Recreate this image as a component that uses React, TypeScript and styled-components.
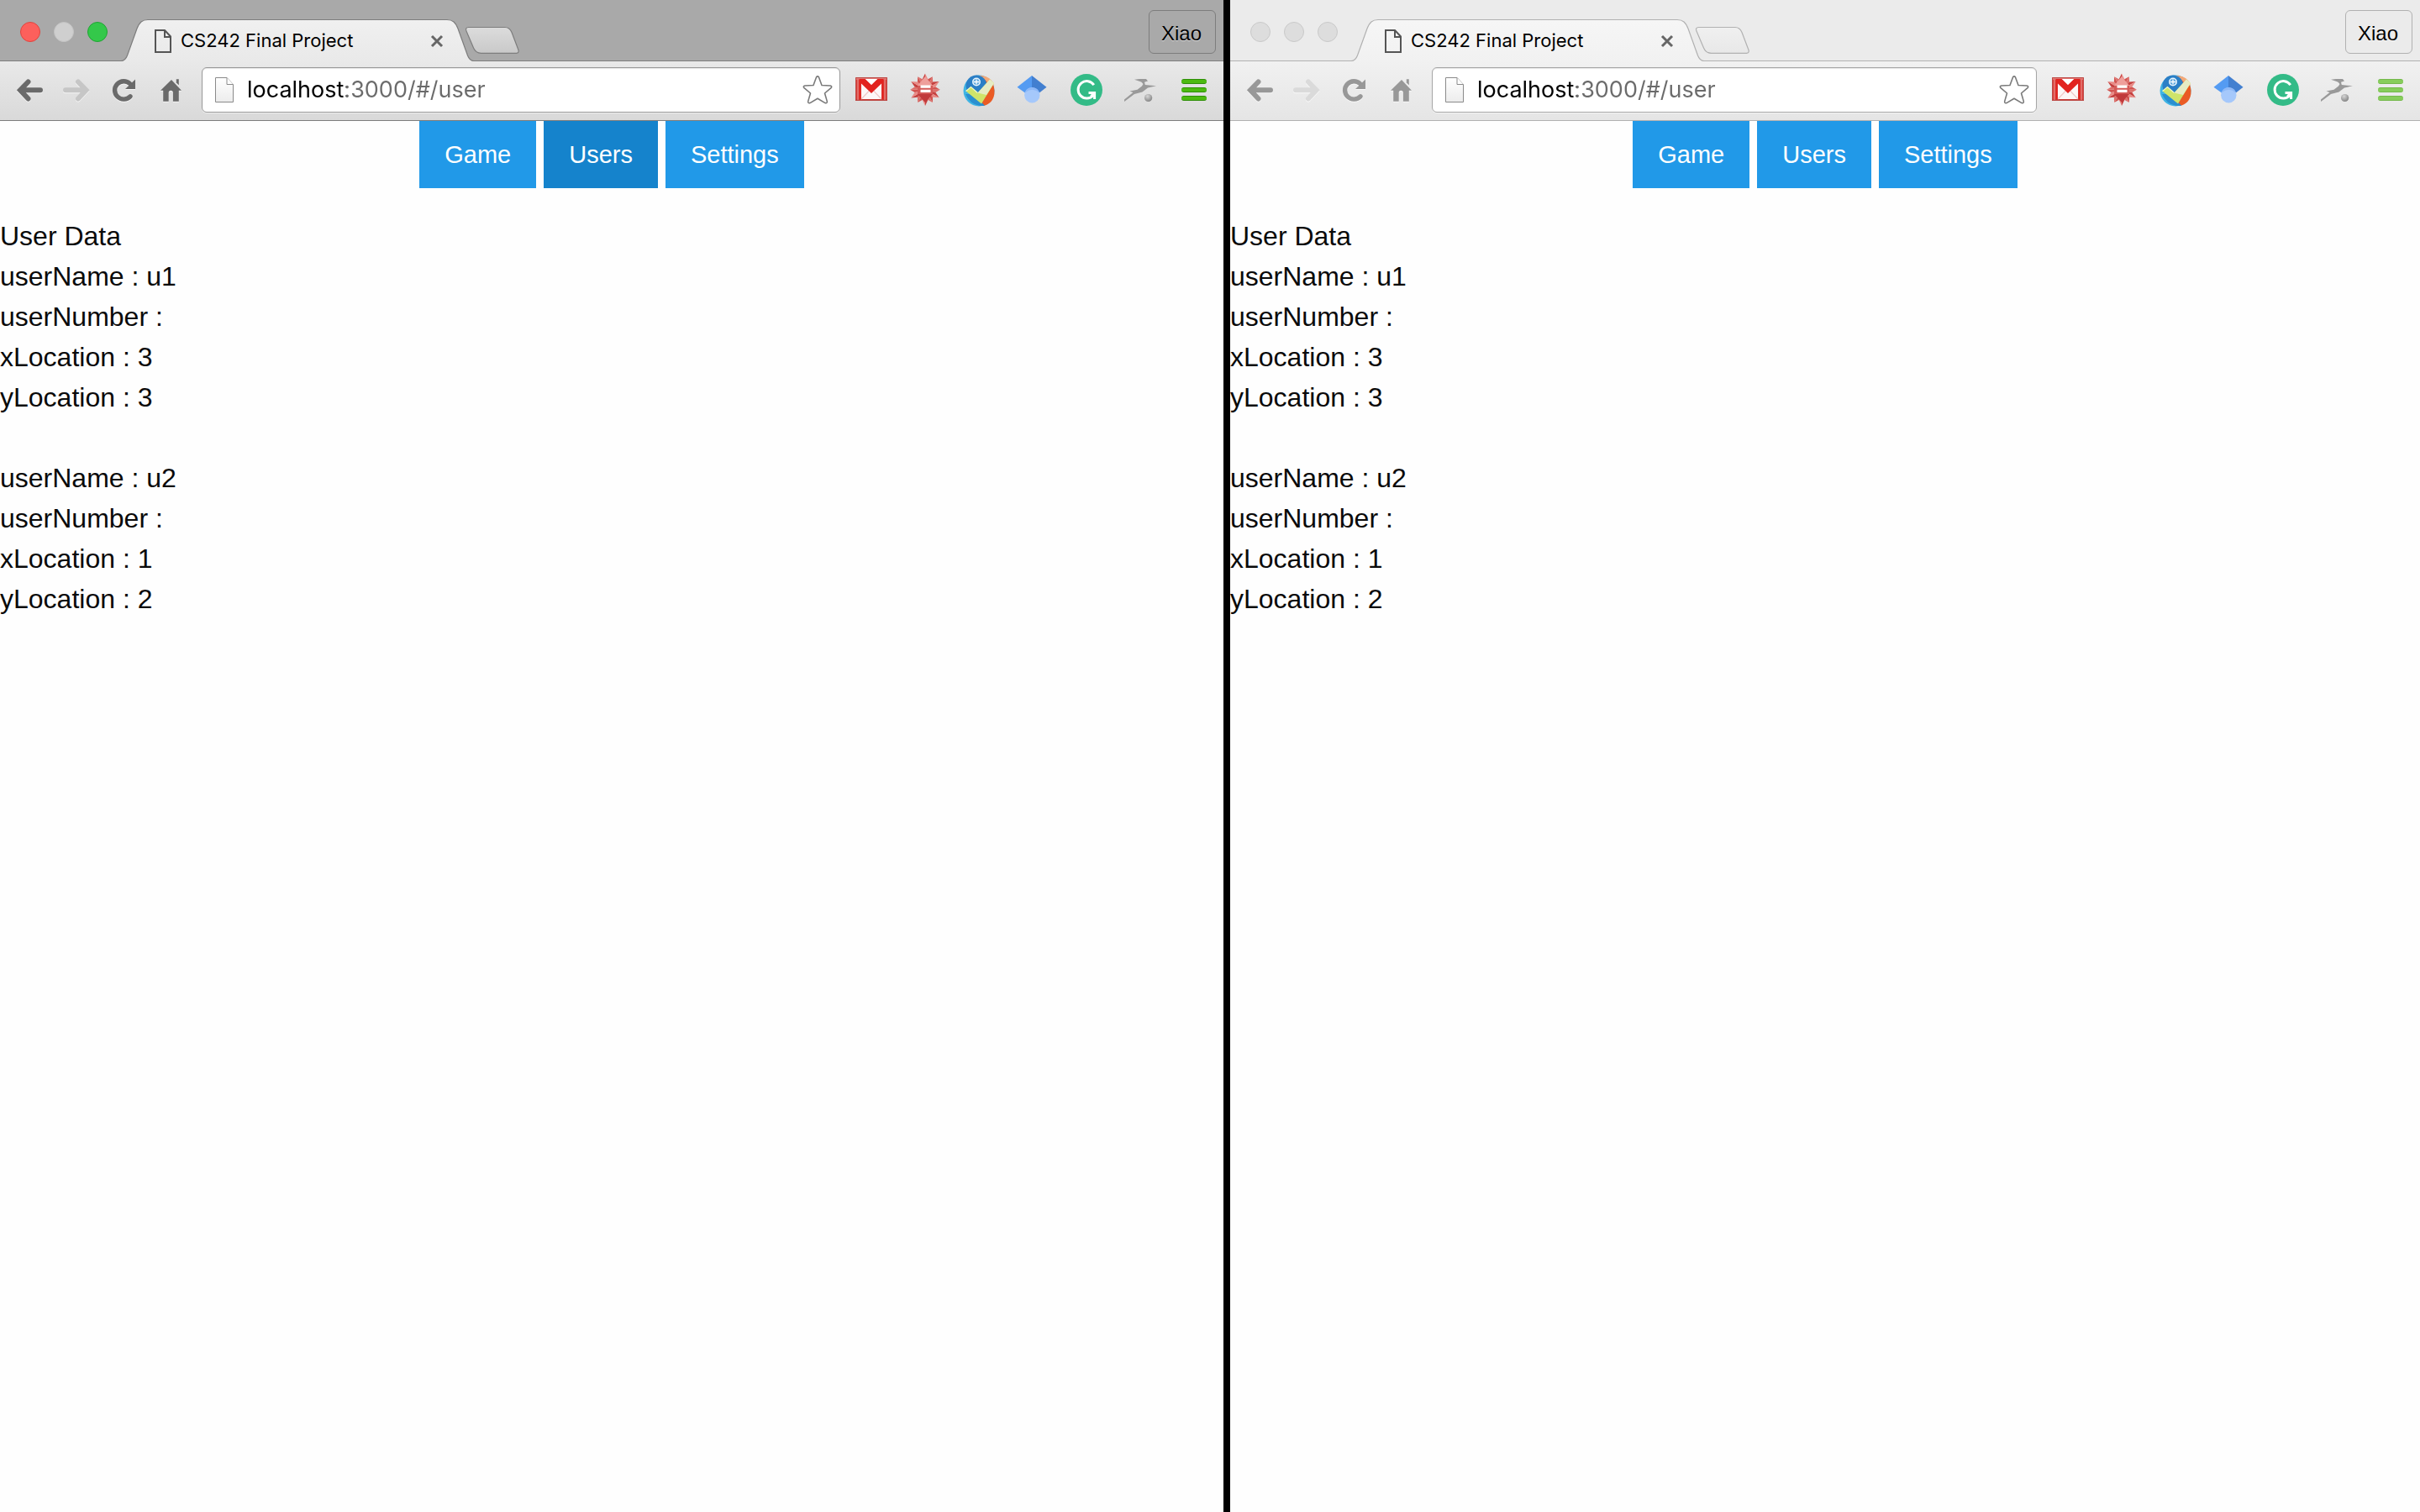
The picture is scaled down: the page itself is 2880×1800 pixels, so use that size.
import React from "react";
import styled, { createGlobalStyle, ThemeProvider } from "styled-components";

const activeTheme = {
  frame: "#a9a9a9",
  line: "#7d7d7d",
  tabTop: "#f0f0f0",
  barTop: "#e9e9e9",
  barBottom: "#d9d9d9",
  icon: "#6a6a6a",
  iconOff: "#c6c6c6",
  newTabTop: "#dcdcdc",
  newTabBottom: "#c9c9c9",
  fieldLine: "#999999",
  menu: "#4cba10",
  menuEdge: "#2f8f08",
  lights: ["#fc605c", "#cfcfcf", "#34c84a"],
  lightEdges: ["#e0443e", "#c3c3c3", "#1fa533"],
};

const idleTheme: typeof activeTheme = {
  frame: "#ebebeb",
  line: "#b1b1b1",
  tabTop: "#f6f6f6",
  barTop: "#f1f1f1",
  barBottom: "#e5e5e5",
  icon: "#989898",
  iconOff: "#dadada",
  newTabTop: "#f0f0f0",
  newTabBottom: "#e8e8e8",
  fieldLine: "#a6a6a6",
  menu: "#87cd5b",
  menuEdge: "#74b84b",
  lights: ["#dddddd", "#dddddd", "#dddddd"],
  lightEdges: ["#c9c9c9", "#c9c9c9", "#c9c9c9"],
};

type ChromeTheme = { theme: any };

const GlobalStyle = createGlobalStyle`
  * { box-sizing: border-box; }
  body { margin: 0; background: #000; }
  button { padding: 0; border: 0; background: none; font: inherit; color: inherit; cursor: pointer; }
  svg { display: block; overflow: visible; }
`;

const Desktop = styled.main`
  display: grid;
  grid-template-columns: 182fr 177fr;
  gap: 8px;
  min-height: 100vh;
  background: #000;
`;

const BrowserWindow = styled.section`
  display: flex;
  flex-direction: column;
  min-width: 0;
  background: #fefefe;
`;

const TitleBar = styled.header<ChromeTheme>`
  display: flex;
  align-items: flex-start;
  height: 73px;
  padding: 0 9px 0 24px;
  background: ${({ theme }) => theme.frame};
  border-bottom: 1px solid ${({ theme }) => theme.line};
`;

const Lights = styled.div`
  display: flex;
  gap: 16px;
  padding-top: 26px;
`;

const Light = styled.button<{ $fill: string; $edge: string }>`
  width: 24px;
  height: 24px;
  border: 1px solid ${({ $edge }) => $edge};
  border-radius: 50%;
  background: ${({ $fill }) => $fill};
`;

const Tab = styled.div`
  display: flex;
  height: 50px;
  margin: 23px 0 0 15px;
`;

const TabBody = styled.div<ChromeTheme>`
  display: flex;
  align-items: center;
  width: 356px;
  padding: 0 5px 0 8px;
  border-top: 1px solid ${({ theme }) => theme.line};
  background: linear-gradient(${({ theme }) => `${theme.tabTop}, ${theme.barTop}`});
`;

const TabTitle = styled.span`
  flex: 1;
  padding: 0 0 2px 11px;
  font: 22px/28px Inter, "Liberation Sans", sans-serif;
  color: #000;
  white-space: nowrap;
`;

const NewTab = styled.button`
  margin: 32px 0 0 -11px;
`;

const Profile = styled.button<ChromeTheme>`
  width: 80px;
  height: 52px;
  margin: 12px 0 0 auto;
  border: 1px solid ${({ theme }) => theme.line};
  border-radius: 6px;
  font: 24px/28px "Liberation Sans", Arial, sans-serif;
  color: #000;
  text-shadow: 0 1px 0 rgba(255, 255, 255, 0.6);
  padding: 3px 2px 0 0;
`;

const Toolbar = styled.div<ChromeTheme>`
  display: flex;
  align-items: center;
  height: 71px;
  padding: 7px 20px 9px;
  background: linear-gradient(${({ theme }) => `${theme.barTop}, ${theme.barBottom}`});
  border-bottom: 1px solid ${({ theme }) => theme.line};
`;

const NavButtons = styled.div`
  display: flex;
  gap: 24px;
  svg { filter: drop-shadow(0 1px 0 rgba(255, 255, 255, 0.7)); }
`;

const AddressBar = styled.form<ChromeTheme>`
  display: flex;
  flex: 1;
  align-items: center;
  min-width: 0;
  height: 54px;
  margin: 0 18px 0 20px;
  padding: 0 8px 0 15px;
  border: 1px solid ${({ theme }) => theme.fieldLine};
  border-radius: 6px;
  background: #fff;
  box-shadow: 0 1px 0 rgba(255, 255, 255, 0.5), inset 0 1px 1px rgba(0, 0, 0, 0.1);
`;

/* The host is drawn black and the rest of the address grey. */
const AddressInput = styled.input`
  flex: 1;
  min-width: 0;
  height: 40px;
  margin-left: 16px;
  padding: 0;
  border: 0;
  outline: 0;
  font: 27px/40px Inter, "Liberation Sans", sans-serif;
  color: #6b6b6b;
  background: linear-gradient(90deg, #000 118px, #6b6b6b 118px);
  background-clip: text;
  -webkit-background-clip: text;
  -webkit-text-fill-color: transparent;
`;

const Extensions = styled.div`
  display: flex;
  gap: 26px;
`;

const MenuButton = styled.button<ChromeTheme>`
  display: flex;
  flex-direction: column;
  gap: 4px;
  width: 30px;
  margin-left: 30px;
`;

const MenuBar = styled.span<ChromeTheme>`
  height: 6px;
  border-radius: 3px;
  border-top: 1px solid ${({ theme }) => theme.menuEdge};
  border-bottom: 1px solid ${({ theme }) => theme.menuEdge};
  background: ${({ theme }) => theme.menu};
`;

const SiteNav = styled.nav`
  display: flex;
  justify-content: center;
  gap: 9px;
`;

const SiteLink = styled.a<{ $current?: boolean }>`
  padding: 20px 30px;
  font: 29px/40px "Liberation Sans", Arial, sans-serif;
  color: #fefefe;
  text-decoration: none;
  background: ${({ $current }) => ($current ? "#1583cc" : "#2199e8")};
`;

const Page = styled.div`
  padding-top: 33px;
  font: 32px/48px "Liberation Sans", Arial, sans-serif;
  color: #0a0a0a;
`;

const Heading = styled.h1`
  margin: 0;
  font: inherit;
`;

const UserRecord = styled.ul`
  margin: 0 0 48px;
  padding: 0;
  list-style: none;
`;

function Back({ color }: { color: string }) {
  return (
    <svg width="32" height="32" viewBox="0 0 32 32" fill="none" stroke={color} strokeWidth="6" strokeLinecap="round">
      <path d="M13.5 6.5 4 16.3 13.5 26.5M5 16.3H28" strokeLinejoin="miter" />
    </svg>
  );
}

function Forward({ color }: { color: string }) {
  return (
    <svg width="32" height="32" viewBox="0 0 32 32" fill="none" stroke={color} strokeWidth="6" strokeLinecap="round">
      <path d="M17 6.5 26.5 16.3 17 26.5M25 16.3H2" strokeLinejoin="miter" />
    </svg>
  );
}

function Reload({ color }: { color: string }) {
  return (
    <svg width="32" height="32" viewBox="0 0 32 32">
      <path d="M23 23.8A10.7 10.7 0 1 1 22.6 8.6" fill="none" stroke={color} strokeWidth="5.4" strokeLinecap="round" />
      <path d="M29 3.5V15H17Z" fill={color} />
    </svg>
  );
}

function Home({ color }: { color: string }) {
  return (
    <svg width="32" height="32" viewBox="0 0 32 32" fill={color}>
      <path d="M16 4 3 16.7h3.2v13h6.5V19.4a2.6 2.6 0 0 1 5.2 0v10.3h6.9v-13H28Z" />
      <path d="M21.8 3.3h3v7.2l-3-3Z" />
    </svg>
  );
}

function TabFile() {
  return (
    <svg width="20" height="28" viewBox="0 0 20 28" fill="none" stroke="#555" strokeWidth="2">
      <path d="M1 1H12L19 8.5V27H1Z" />
      <path d="M12 1V9H19" />
    </svg>
  );
}

function PageFile({ id }: { id: string }) {
  return (
    <svg width="22" height="30" viewBox="0 0 22 30" stroke="#8a8a8a">
      <defs>
        <linearGradient id={id} x2="0" y2="1">
          <stop stopColor="#fff" />
          <stop offset="1" stopColor="#ececec" />
        </linearGradient>
      </defs>
      <path d="M.5 .5H14L21.5 8.5V29.5H.5Z" fill={`url(#${id})`} />
      <path d="M14 .5V8.5H21.5" fill="#fff" />
    </svg>
  );
}

function Cross() {
  return (
    <svg width="14" height="14" viewBox="0 0 14 14" stroke="#666" strokeWidth="3">
      <path d="M1 1 13 13M13 1 1 13" />
    </svg>
  );
}

function Star() {
  return (
    <svg width="36" height="34" viewBox="0 0 36 34" fill="#fff" stroke="#7a7a7a" strokeWidth="1.6" strokeLinejoin="round">
      <path d="M16.6 1.8Q18 0 19.4 1.8L23 11.5 33 12Q35.8 12.6 34 14.6L26.5 21 29.3 30.6Q29.6 33.4 27 32.6L18 27.2 9 32.6Q6.4 33.4 6.7 30.6L9.5 21 2 14.6Q.2 12.6 3 12L13 11.5Z" />
    </svg>
  );
}

function Gmail() {
  return (
    <svg width="38" height="38" viewBox="0 0 38 38">
      <path d="M0 4H38V32H0Z" fill="#d8403b" />
      <path d="M0 4H38V7H0Z" fill="#e07672" />
      <path d="M0 30.5H38V32H0Z" fill="#b5332f" />
      <path d="M7 9V30H31V9L19 21Z" fill="#fdf7f7" />
      <path d="M7 30 16 20.5M31 30 22 20.5" stroke="#f0c9c8" strokeWidth="1.2" />
      <path d="M11.5 6H26.5L19 13.5Z" fill="#fff" />
      <path d="M4.5 6H11.5L19 13.2 26.5 6H33.5V30H31.5V11L19 23 6.5 11V30H4.5Z" fill="#e2231f" />
      <path d="M.5 4.5H37.5V31.5H.5Z" fill="none" stroke="#bd4a46" />
      <path d="M3 7V31M35 7V31" stroke="#ec9a97" strokeWidth="1" />
    </svg>
  );
}

const spikes = Array.from({ length: 24 }, (_, i) => {
  const angle = (i * Math.PI) / 12 - Math.PI / 2;
  const radius = i % 2 ? 12.8 : i % 4 ? 17.8 : 19.3;
  return `${(19 + radius * Math.cos(angle)).toFixed(1)},${(18.7 + radius * Math.sin(angle)).toFixed(1)}`;
});

const facets = spikes.map((point, i) => `${point} ${spikes[(i + 1) % 24]} 19,18.7`);
const facetFills = ["#e98a85", "#d25450", "#dd706b", "#c6413f"];

function Wolfram() {
  return (
    <svg width="38" height="38" viewBox="0 0 38 38">
      {facets.map((points, i) => (
        <polygon key={i} points={points} fill={facetFills[i % 4]} />
      ))}
      <path d="M19 9 28 14 28 24 19 29 10 24 10 14Z" fill="#d45a57" />
      <path d="M10 14 19 3 28 14Z" fill="#ee9f9b" />
      <path d="M10 24 19 34 28 24Z" fill="#c03a3b" />
      <path d="M13.5 13.5H25.5V16.7H13.5ZM13.5 18.8H25.5V22H13.5Z" fill="#fff" />
    </svg>
  );
}

function Checker() {
  return (
    <svg width="38" height="38" viewBox="0 0 38 38">
      <circle cx="19" cy="20" r="18.5" fill="#3fb4e4" />
      <path d="M13 2.6C26-.5 37 8 37.5 20S30 37 24 38L15 20Z" fill="#ea5b24" />
      <path d="M14 3C25-.5 35 5 37 14L31 12 25 6Z" fill="#f3a878" />
      <circle cx="16" cy="14" r="12.5" fill="#2b7fc6" />
      <path d="M3 24Q8 36 20 38H26L14 24Z" fill="#2a8fd0" />
      <circle cx="16" cy="9.5" r="4.2" fill="#5aa4dc" stroke="#e9f5fd" strokeWidth="1.6" />
      <path d="M16 6.5V12.5M13 9.5H19" stroke="#fff" strokeWidth="1.3" />
      <path d="M3.5 20.500 9.500 15.500 17.500 22.500 32 6.500 37 11 22 35.500Z" fill="#cfe46a" />
      <path d="M17.5 22.5 32 6.5 37 11 28 25Z" fill="#e6ecc4" />
      <path d="M3.5 20.5 9.5 15.5 17.5 22.5" fill="none" stroke="#f3fbc4" strokeWidth="1.2" />
    </svg>
  );
}

function Scholar() {
  return (
    <svg width="38" height="38" viewBox="0 0 38 38">
      <path d="M18 2 .5 15.8 12 24H18Z" fill="#549bf2" />
      <path d="M18 2 35.5 15.8 25 24H18Z" fill="#427fd0" />
      <circle cx="18.3" cy="25.3" r="9.2" fill="#a5c8fb" />
      <path d="M9.6 22.4A9.2 9.2 0 0 1 27 22.4Q18.3 15 9.6 22.4Z" fill="#8db8f7" />
    </svg>
  );
}

function Grammarly() {
  return (
    <svg width="38" height="38" viewBox="0 0 38 38" fill="none" stroke="#fff" strokeWidth="3">
      <circle cx="19" cy="19" r="19" fill="#33bb87" stroke="none" />
      <path d="M27.8 13.2A10.2 10.2 0 1 0 27 25.5" />
      <path d="M21.5 22.6H28.6V30" />
      <path d="M28.5 22.5 24.5 26.5" />
    </svg>
  );
}

function Jaguar({ id }: { id: string }) {
  return (
    <svg width="38" height="38" viewBox="0 0 38 38">
      <defs>
        <radialGradient id={id} cx=".4" cy=".3" r=".7">
          <stop stopColor="#d6d6d6" />
          <stop offset="1" stopColor="#858585" />
        </radialGradient>
      </defs>
      <path
        d="M0 33 0 30.5 10.5 22 6.5 20.5 15.5 18.8 21 14.5 22.5 12 20.5 9.8 18 8.8 12 6.7 18 6 26 6 28 8.5 24 9.8 24.8 13 38 14.3 28 16.5 21.5 21.5 12 24Z"
        fill="#999"
      />
      <circle cx="28.6" cy="28.5" r="4.6" fill={`url(#${id})`} />
    </svg>
  );
}

function TabCap({ id, theme, flip }: { id: string; theme: typeof activeTheme; flip?: boolean }) {
  const edge = "M0 49.5H1C5 49.5 7 47 8.5 43L20 11C23 3.5 26 .5 33 .5";
  return (
    <svg width="33" height="50" viewBox="0 0 33 50">
      <defs>
        <linearGradient id={id} x2="0" y2="1">
          <stop stopColor={theme.tabTop} />
          <stop offset="1" stopColor={theme.barTop} />
        </linearGradient>
      </defs>
      <g transform={flip ? "translate(33 0) scale(-1 1)" : undefined}>
        <path d={`${edge}V50H0Z`} fill={`url(#${id})`} />
        <path d={edge} fill="none" stroke={theme.line} strokeWidth="1.2" />
      </g>
    </svg>
  );
}

function NewTabShape({ id, theme }: { id: string; theme: typeof activeTheme }) {
  return (
    <svg width="64" height="32" viewBox="0 0 64 32">
      <defs>
        <linearGradient id={id} x2="0" y2="1">
          <stop stopColor={theme.newTabTop} />
          <stop offset="1" stopColor={theme.newTabBottom} />
        </linearGradient>
      </defs>
      <path
        d="M3.5 .5H47C51.5 .5 53.5 3 55 6.5L62.8 27C63.8 29.5 63 31.3 60.5 31.3H18.5C13.5 31.3 11 28.5 9.5 25L1 5C0 2.5 .5 .5 3.5 .5Z"
        fill={`url(#${id})`}
        stroke={theme.line}
        strokeWidth="1.2"
      />
    </svg>
  );
}

const lightNames = ["Close window", "Minimize window", "Zoom window"];

const links = [
  { label: "Game", href: "#/game" },
  { label: "Users", href: "#/user" },
  { label: "Settings", href: "#/settings" },
];

const users = [
  { userName: "u1", userNumber: "", xLocation: 3, yLocation: 3 },
  { userName: "u2", userNumber: "", xLocation: 1, yLocation: 2 },
];

function Browser({ id, theme, current }: { id: string; theme: typeof activeTheme; current?: string }) {
  return (
    <ThemeProvider theme={theme}>
      <BrowserWindow>
        <TitleBar>
          <Lights>
            {lightNames.map((name, i) => (
              <Light key={name} aria-label={name} $fill={theme.lights[i]} $edge={theme.lightEdges[i]} />
            ))}
          </Lights>
          <Tab>
            <TabCap id={`${id}-cap-l`} theme={theme} />
            <TabBody>
              <TabFile />
              <TabTitle>CS242 Final Project</TabTitle>
              <button aria-label="Close tab">
                <Cross />
              </button>
            </TabBody>
            <TabCap id={`${id}-cap-r`} theme={theme} flip />
          </Tab>
          <NewTab aria-label="New tab">
            <NewTabShape id={`${id}-new`} theme={theme} />
          </NewTab>
          <Profile>Xiao</Profile>
        </TitleBar>
        <Toolbar>
          <NavButtons>
            <button aria-label="Back"><Back color={theme.icon} /></button>
            <button aria-label="Forward"><Forward color={theme.iconOff} /></button>
            <button aria-label="Reload"><Reload color={theme.icon} /></button>
            <button aria-label="Home"><Home color={theme.icon} /></button>
          </NavButtons>
          <AddressBar>
            <PageFile id={`${id}-page`} />
            <AddressInput aria-label="Address" defaultValue="localhost:3000/#/user" spellCheck={false} />
            <button type="button" aria-label="Bookmark this page"><Star /></button>
          </AddressBar>
          <Extensions>
            <button aria-label="Gmail"><Gmail /></button>
            <button aria-label="Wolfram Alpha"><Wolfram /></button>
            <button aria-label="Link checker"><Checker /></button>
            <button aria-label="Google Scholar"><Scholar /></button>
            <button aria-label="Grammarly"><Grammarly /></button>
            <button aria-label="Jaguar"><Jaguar id={`${id}-ball`} /></button>
          </Extensions>
          <MenuButton aria-label="Menu">
            <MenuBar />
            <MenuBar />
            <MenuBar />
          </MenuButton>
        </Toolbar>
        <SiteNav>
          {links.map(({ label, href }) => (
            <SiteLink key={label} href={href} $current={label === current}>
              {label}
            </SiteLink>
          ))}
        </SiteNav>
        <Page>
          <Heading>User Data</Heading>
          {users.map((user) => (
            <UserRecord key={user.userName}>
              {Object.entries(user).map(([key, value]) => (
                <li key={key}>{`${key} : ${value}`}</li>
              ))}
            </UserRecord>
          ))}
        </Page>
      </BrowserWindow>
    </ThemeProvider>
  );
}

export default function App() {
  return (
    <>
      <GlobalStyle />
      <Desktop>
        <Browser id="left" theme={activeTheme} current="Users" />
        <Browser id="right" theme={idleTheme} />
      </Desktop>
    </>
  );
}
